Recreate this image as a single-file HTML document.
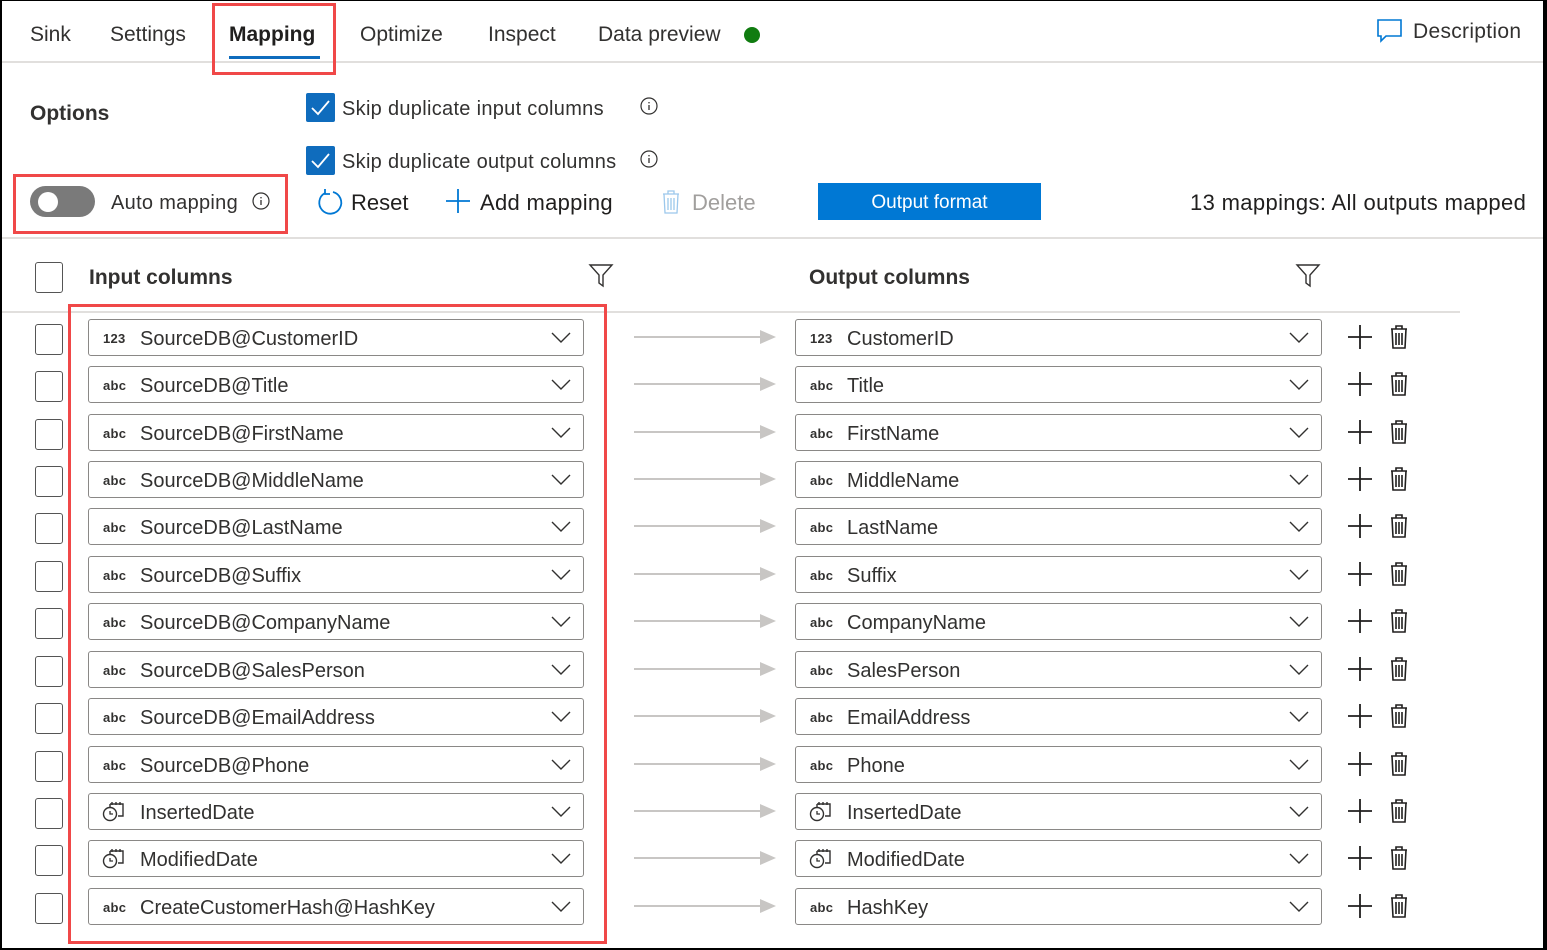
<!DOCTYPE html>
<html><head><meta charset="utf-8"><style>
*{box-sizing:border-box;margin:0;padding:0}
body{width:1547px;height:950px;background:#fff;font-family:"Liberation Sans",sans-serif;color:#323130;position:relative;overflow:hidden}
.a{position:absolute}
.frame{position:absolute;left:0;top:0;width:1547px;height:950px;border:2px solid #000;border-right-width:4px;border-top-width:1px;pointer-events:none}
.tab{position:absolute;top:23px;font-size:21px;color:#323130}
.red{position:absolute;border:3px solid #f04848}
.cb{position:absolute;width:28px;height:31px;border:1px solid #555;border-radius:3px;background:#fff}
.box{position:absolute;height:37px;border:1px solid #8a8886;border-radius:3px;background:#fff;font-size:20px;color:#323130}
.box .t{position:absolute;left:14px;top:11px;font-size:13px;color:#323130;font-weight:bold;letter-spacing:0.3px}
.box .n{position:absolute;left:51px;top:8px}
.box svg.ch{position:absolute;right:12px;top:12px}
.arr{position:absolute;left:634px;width:142px;height:14px}
.row{position:absolute;left:0;width:1547px;height:40px}
</style></head><body>
<!-- tabs -->
<div class="tab" style="left:30px">Sink</div>
<div class="tab" style="left:110px">Settings</div>
<div class="tab" style="left:229px;font-weight:bold;color:#201f1e">Mapping</div>
<div class="a" style="left:229px;top:56px;width:91px;height:3px;background:#0f6cbd"></div>
<div class="tab" style="left:360px">Optimize</div>
<div class="tab" style="left:488px">Inspect</div>
<div class="tab" style="left:598px">Data preview</div>
<div class="a" style="left:744px;top:27px;width:16px;height:16px;border-radius:50%;background:#107c10"></div>
<svg class="a" style="left:1376px;top:18px" width="28" height="26" viewBox="0 0 28 26"><path d="M2 2h23v16H10l-5 5v-5H2z" fill="none" stroke="#0078d4" stroke-width="1.6"/></svg>
<div class="tab" style="left:1413px;top:20px;letter-spacing:0.3px">Description</div>
<div class="a" style="left:0;top:61px;width:1547px;height:2px;background:#e1dfdd"></div>
<div class="red" style="left:212px;top:3px;width:124px;height:72px"></div>

<!-- options -->
<div class="a" style="left:30px;top:102px;font-size:21px;font-weight:bold;color:#323130">Options</div>
<div class="a" style="left:306px;top:93px;width:29px;height:29px;background:#0f6cbd;border-radius:2px"><svg width="29" height="29"><path d="M6 15l6 6 11-13" fill="none" stroke="#fff" stroke-width="1.8"/></svg></div>
<div class="a" style="left:342px;top:98px;font-size:20px;letter-spacing:0.3px">Skip duplicate input columns</div>
<svg class="a" style="left:640px;top:97px" width="18" height="18"><circle cx="9" cy="9" r="8" fill="none" stroke="#323130" stroke-width="1.2"/><path d="M9 8v5M9 5v1.4" stroke="#323130" stroke-width="1.3"/></svg>
<div class="a" style="left:306px;top:146px;width:29px;height:29px;background:#0f6cbd;border-radius:2px"><svg width="29" height="29"><path d="M6 15l6 6 11-13" fill="none" stroke="#fff" stroke-width="1.8"/></svg></div>
<div class="a" style="left:342px;top:151px;font-size:20px;letter-spacing:0.3px">Skip duplicate output columns</div>
<svg class="a" style="left:640px;top:150px" width="18" height="18"><circle cx="9" cy="9" r="8" fill="none" stroke="#323130" stroke-width="1.2"/><path d="M9 8v5M9 5v1.4" stroke="#323130" stroke-width="1.3"/></svg>

<div class="a" style="left:30px;top:186px;width:65px;height:31px;border-radius:16px;background:#7a7a7a"></div>
<div class="a" style="left:38px;top:192px;width:20px;height:20px;border-radius:50%;background:#fff"></div>
<div class="a" style="left:111px;top:192px;font-size:20px;letter-spacing:0.3px">Auto mapping</div>
<svg class="a" style="left:252px;top:192px" width="18" height="18"><circle cx="9" cy="9" r="8" fill="none" stroke="#323130" stroke-width="1.2"/><path d="M9 8v5M9 5v1.4" stroke="#323130" stroke-width="1.3"/></svg>
<div class="red" style="left:13px;top:174px;width:275px;height:60px"></div>

<svg class="a" style="left:315px;top:188px" width="30" height="30"><path d="M10 5A11 11 0 1 0 18 4" fill="none" stroke="#0078d4" stroke-width="1.8"/><path d="M10 1v5h5" fill="none" stroke="#0078d4" stroke-width="1.8"/></svg>
<div class="a" style="left:351px;top:190px;font-size:22px;color:#201f1e">Reset</div>
<svg class="a" style="left:445px;top:188px" width="26" height="26"><path d="M13 1v24M1 13h24" stroke="#0078d4" stroke-width="1.8"/></svg>
<div class="a" style="left:480px;top:190px;font-size:22px;color:#201f1e;letter-spacing:0.3px">Add mapping</div>
<svg class="a" style="left:660px;top:188px" width="22" height="27"><path d="M3 6h16M8 6V3h6v3M4 6l1 19h12l1-19M8 10v12M11 10v12M14 10v12" fill="none" stroke="#9cc8ec" stroke-width="1.3"/></svg>
<div class="a" style="left:692px;top:190px;font-size:22px;color:#a19f9d">Delete</div>
<div class="a" style="left:818px;top:183px;width:223px;height:37px;background:#0078d4;color:#fff;font-size:19px;text-align:center;line-height:39px">Output format</div>
<div class="a" style="left:1190px;top:190px;font-size:22px;color:#201f1e;letter-spacing:0.35px">13 mappings: All outputs mapped</div>
<div class="a" style="left:0;top:237px;width:1547px;height:2px;background:#e1dfdd"></div>

<!-- headers -->
<div class="cb" style="left:35px;top:262px"></div>
<div class="a" style="left:89px;top:266px;font-size:21px;font-weight:bold;color:#323130">Input columns</div>
<svg class="a" style="left:588px;top:262px" width="26" height="26"><path d="M2 3h22l-9 10v11l-4-3v-8z" fill="none" stroke="#323130" stroke-width="1.4"/></svg>
<div class="a" style="left:809px;top:266px;font-size:21px;font-weight:bold;color:#323130">Output columns</div>
<svg class="a" style="left:1295px;top:262px" width="26" height="26"><path d="M2 3h22l-9 10v11l-4-3v-8z" fill="none" stroke="#323130" stroke-width="1.4"/></svg>
<div class="a" style="left:0;top:311px;width:1460px;height:2px;background:#e1dfdd"></div>
<div class="red" style="left:68px;top:304px;width:539px;height:640px"></div>

<svg width="0" height="0" style="position:absolute"><defs>
<symbol id="chev" viewBox="0 0 20 12"><path d="M1 1l9 9 9-9" fill="none" stroke="#323130" stroke-width="1.4"/></symbol>
<symbol id="ar" viewBox="0 0 142 14"><path d="M0 7h126" stroke="#c8c6c4" stroke-width="2"/><path d="M126 0l16 7-16 7z" fill="#c8c6c4"/></symbol>
<symbol id="pl" viewBox="0 0 26 26"><path d="M13 1v24M1 13h24" stroke="#201f1e" stroke-width="1.8"/></symbol>
<symbol id="tr" viewBox="0 0 22 27"><path d="M3 6h16M8 6V3h6v3M4 6l1 19h12l1-19M8 10v12M11 10v12M14 10v12" fill="none" stroke="#201f1e" stroke-width="1.6"/></symbol>
<symbol id="dt" viewBox="0 0 22 22"><circle cx="8" cy="13" r="6.5" fill="none" stroke="#323130" stroke-width="1.4"/><path d="M8 10v3h3" fill="none" stroke="#323130" stroke-width="1.3"/><path d="M8 3h13v12h-5M8 3v3M10 1v3M14 1v3M18 1v3" fill="none" stroke="#323130" stroke-width="1.4"/></symbol>
</defs></svg>

<!-- rows -->
<div class="row" style="top:319px"><div class="cb" style="left:35px;top:5px"></div><div class="box" style="left:88px;width:496px"><span class="t">123</span><span class="n">SourceDB@CustomerID</span><svg class="ch" width="20" height="12"><use href="#chev"/></svg></div><svg class="arr" style="top:11px"><use href="#ar"/></svg><div class="box" style="left:795px;width:527px"><span class="t">123</span><span class="n">CustomerID</span><svg class="ch" width="20" height="12"><use href="#chev"/></svg></div><svg class="a" style="left:1347px;top:5px" width="26" height="26"><use href="#pl"/></svg><svg class="a" style="left:1388px;top:4px" width="22" height="27"><use href="#tr"/></svg></div>

<div class="row" style="top:366px"><div class="cb" style="left:35px;top:5px"></div><div class="box" style="left:88px;width:496px"><span class="t">abc</span><span class="n">SourceDB@Title</span><svg class="ch" width="20" height="12"><use href="#chev"/></svg></div><svg class="arr" style="top:11px"><use href="#ar"/></svg><div class="box" style="left:795px;width:527px"><span class="t">abc</span><span class="n">Title</span><svg class="ch" width="20" height="12"><use href="#chev"/></svg></div><svg class="a" style="left:1347px;top:5px" width="26" height="26"><use href="#pl"/></svg><svg class="a" style="left:1388px;top:4px" width="22" height="27"><use href="#tr"/></svg></div>

<div class="row" style="top:414px"><div class="cb" style="left:35px;top:5px"></div><div class="box" style="left:88px;width:496px"><span class="t">abc</span><span class="n">SourceDB@FirstName</span><svg class="ch" width="20" height="12"><use href="#chev"/></svg></div><svg class="arr" style="top:11px"><use href="#ar"/></svg><div class="box" style="left:795px;width:527px"><span class="t">abc</span><span class="n">FirstName</span><svg class="ch" width="20" height="12"><use href="#chev"/></svg></div><svg class="a" style="left:1347px;top:5px" width="26" height="26"><use href="#pl"/></svg><svg class="a" style="left:1388px;top:4px" width="22" height="27"><use href="#tr"/></svg></div>

<div class="row" style="top:461px"><div class="cb" style="left:35px;top:5px"></div><div class="box" style="left:88px;width:496px"><span class="t">abc</span><span class="n">SourceDB@MiddleName</span><svg class="ch" width="20" height="12"><use href="#chev"/></svg></div><svg class="arr" style="top:11px"><use href="#ar"/></svg><div class="box" style="left:795px;width:527px"><span class="t">abc</span><span class="n">MiddleName</span><svg class="ch" width="20" height="12"><use href="#chev"/></svg></div><svg class="a" style="left:1347px;top:5px" width="26" height="26"><use href="#pl"/></svg><svg class="a" style="left:1388px;top:4px" width="22" height="27"><use href="#tr"/></svg></div>

<div class="row" style="top:508px"><div class="cb" style="left:35px;top:5px"></div><div class="box" style="left:88px;width:496px"><span class="t">abc</span><span class="n">SourceDB@LastName</span><svg class="ch" width="20" height="12"><use href="#chev"/></svg></div><svg class="arr" style="top:11px"><use href="#ar"/></svg><div class="box" style="left:795px;width:527px"><span class="t">abc</span><span class="n">LastName</span><svg class="ch" width="20" height="12"><use href="#chev"/></svg></div><svg class="a" style="left:1347px;top:5px" width="26" height="26"><use href="#pl"/></svg><svg class="a" style="left:1388px;top:4px" width="22" height="27"><use href="#tr"/></svg></div>

<div class="row" style="top:556px"><div class="cb" style="left:35px;top:5px"></div><div class="box" style="left:88px;width:496px"><span class="t">abc</span><span class="n">SourceDB@Suffix</span><svg class="ch" width="20" height="12"><use href="#chev"/></svg></div><svg class="arr" style="top:11px"><use href="#ar"/></svg><div class="box" style="left:795px;width:527px"><span class="t">abc</span><span class="n">Suffix</span><svg class="ch" width="20" height="12"><use href="#chev"/></svg></div><svg class="a" style="left:1347px;top:5px" width="26" height="26"><use href="#pl"/></svg><svg class="a" style="left:1388px;top:4px" width="22" height="27"><use href="#tr"/></svg></div>

<div class="row" style="top:603px"><div class="cb" style="left:35px;top:5px"></div><div class="box" style="left:88px;width:496px"><span class="t">abc</span><span class="n">SourceDB@CompanyName</span><svg class="ch" width="20" height="12"><use href="#chev"/></svg></div><svg class="arr" style="top:11px"><use href="#ar"/></svg><div class="box" style="left:795px;width:527px"><span class="t">abc</span><span class="n">CompanyName</span><svg class="ch" width="20" height="12"><use href="#chev"/></svg></div><svg class="a" style="left:1347px;top:5px" width="26" height="26"><use href="#pl"/></svg><svg class="a" style="left:1388px;top:4px" width="22" height="27"><use href="#tr"/></svg></div>

<div class="row" style="top:651px"><div class="cb" style="left:35px;top:5px"></div><div class="box" style="left:88px;width:496px"><span class="t">abc</span><span class="n">SourceDB@SalesPerson</span><svg class="ch" width="20" height="12"><use href="#chev"/></svg></div><svg class="arr" style="top:11px"><use href="#ar"/></svg><div class="box" style="left:795px;width:527px"><span class="t">abc</span><span class="n">SalesPerson</span><svg class="ch" width="20" height="12"><use href="#chev"/></svg></div><svg class="a" style="left:1347px;top:5px" width="26" height="26"><use href="#pl"/></svg><svg class="a" style="left:1388px;top:4px" width="22" height="27"><use href="#tr"/></svg></div>

<div class="row" style="top:698px"><div class="cb" style="left:35px;top:5px"></div><div class="box" style="left:88px;width:496px"><span class="t">abc</span><span class="n">SourceDB@EmailAddress</span><svg class="ch" width="20" height="12"><use href="#chev"/></svg></div><svg class="arr" style="top:11px"><use href="#ar"/></svg><div class="box" style="left:795px;width:527px"><span class="t">abc</span><span class="n">EmailAddress</span><svg class="ch" width="20" height="12"><use href="#chev"/></svg></div><svg class="a" style="left:1347px;top:5px" width="26" height="26"><use href="#pl"/></svg><svg class="a" style="left:1388px;top:4px" width="22" height="27"><use href="#tr"/></svg></div>

<div class="row" style="top:746px"><div class="cb" style="left:35px;top:5px"></div><div class="box" style="left:88px;width:496px"><span class="t">abc</span><span class="n">SourceDB@Phone</span><svg class="ch" width="20" height="12"><use href="#chev"/></svg></div><svg class="arr" style="top:11px"><use href="#ar"/></svg><div class="box" style="left:795px;width:527px"><span class="t">abc</span><span class="n">Phone</span><svg class="ch" width="20" height="12"><use href="#chev"/></svg></div><svg class="a" style="left:1347px;top:5px" width="26" height="26"><use href="#pl"/></svg><svg class="a" style="left:1388px;top:4px" width="22" height="27"><use href="#tr"/></svg></div>

<div class="row" style="top:793px"><div class="cb" style="left:35px;top:5px"></div><div class="box" style="left:88px;width:496px"><svg class="a" style="left:13px;top:7px" width="22" height="22"><use href="#dt"/></svg><span class="n">InsertedDate</span><svg class="ch" width="20" height="12"><use href="#chev"/></svg></div><svg class="arr" style="top:11px"><use href="#ar"/></svg><div class="box" style="left:795px;width:527px"><svg class="a" style="left:13px;top:7px" width="22" height="22"><use href="#dt"/></svg><span class="n">InsertedDate</span><svg class="ch" width="20" height="12"><use href="#chev"/></svg></div><svg class="a" style="left:1347px;top:5px" width="26" height="26"><use href="#pl"/></svg><svg class="a" style="left:1388px;top:4px" width="22" height="27"><use href="#tr"/></svg></div>

<div class="row" style="top:840px"><div class="cb" style="left:35px;top:5px"></div><div class="box" style="left:88px;width:496px"><svg class="a" style="left:13px;top:7px" width="22" height="22"><use href="#dt"/></svg><span class="n">ModifiedDate</span><svg class="ch" width="20" height="12"><use href="#chev"/></svg></div><svg class="arr" style="top:11px"><use href="#ar"/></svg><div class="box" style="left:795px;width:527px"><svg class="a" style="left:13px;top:7px" width="22" height="22"><use href="#dt"/></svg><span class="n">ModifiedDate</span><svg class="ch" width="20" height="12"><use href="#chev"/></svg></div><svg class="a" style="left:1347px;top:5px" width="26" height="26"><use href="#pl"/></svg><svg class="a" style="left:1388px;top:4px" width="22" height="27"><use href="#tr"/></svg></div>

<div class="row" style="top:888px"><div class="cb" style="left:35px;top:5px"></div><div class="box" style="left:88px;width:496px"><span class="t">abc</span><span class="n">CreateCustomerHash@HashKey</span><svg class="ch" width="20" height="12"><use href="#chev"/></svg></div><svg class="arr" style="top:11px"><use href="#ar"/></svg><div class="box" style="left:795px;width:527px"><span class="t">abc</span><span class="n">HashKey</span><svg class="ch" width="20" height="12"><use href="#chev"/></svg></div><svg class="a" style="left:1347px;top:5px" width="26" height="26"><use href="#pl"/></svg><svg class="a" style="left:1388px;top:4px" width="22" height="27"><use href="#tr"/></svg></div>

<div class="frame"></div>
</body></html>
